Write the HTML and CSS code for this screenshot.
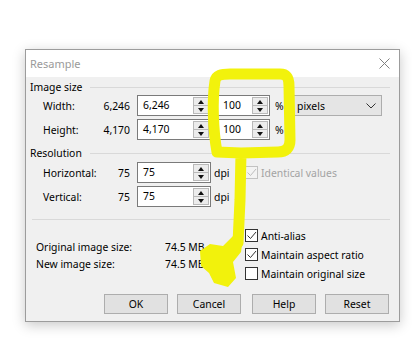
FILE: index.html
```html
<!DOCTYPE html>
<html lang="en">
<head>
    <meta charset="UTF-8">
    <meta name="viewport" content="width=device-width, initial-scale=1.0">
    <title>Resample</title>
    <link rel="stylesheet" href="styles.css">
</head>
<body>
    <div class="dialog">
        <!-- Title bar -->
        <div class="title-bar">
            <span class="title">Resample</span>
            <svg class="close" width="11" height="11" viewBox="0 0 11 11"><path d="M0.5 0.5 L10.5 10.5 M10.5 0.5 L0.5 10.5" stroke="#808080" stroke-width="1" fill="none"/></svg>
        </div>

        <div class="dialog-body">
            <!-- Image size -->
            <div class="group-head"><span>Image size</span></div>
            <div class="row">
                <div class="field-label"><span>Width:</span><span>6,246</span></div>
                <div class="spin wide"><span class="spin-text">6,246</span><span class="arrows"><span class="up"></span><span class="down"></span></span></div>
                <div class="spin narrow"><span class="spin-text">100</span><span class="arrows"><span class="up"></span><span class="down"></span></span></div>
                <span class="pct">%</span>
                <div class="select"><span>pixels</span><svg width="10" height="6" viewBox="0 0 10 6"><path d="M0.5 0.5 L5 5 L9.5 0.5" stroke="#333" fill="none"/></svg></div>
            </div>
            <div class="row">
                <div class="field-label"><span>Height:</span><span>4,170</span></div>
                <div class="spin wide"><span class="spin-text">4,170</span><span class="arrows"><span class="up"></span><span class="down"></span></span></div>
                <div class="spin narrow"><span class="spin-text">100</span><span class="arrows"><span class="up"></span><span class="down"></span></span></div>
                <span class="pct">%</span>
            </div>

            <!-- Resolution -->
            <div class="group-head resolution"><span>Resolution</span></div>
            <div class="row first">
                <div class="field-label"><span>Horizontal:</span><span>75</span></div>
                <div class="spin wide"><span class="spin-text">75</span><span class="arrows"><span class="up"></span><span class="down"></span></span></div>
                <span class="dpi">dpi</span>
                <div class="check disabled">
                    <span class="box"><svg width="11" height="11" viewBox="0 0 11 11"><path d="M1.5 5.5 L4.5 8.5 L10 2" stroke="#bdbdbd" fill="none"/></svg></span>
                    <span>Identical values</span>
                </div>
            </div>
            <div class="row">
                <div class="field-label"><span>Vertical:</span><span>75</span></div>
                <div class="spin wide"><span class="spin-text">75</span><span class="arrows"><span class="up"></span><span class="down"></span></span></div>
                <span class="dpi">dpi</span>
            </div>

            <div class="separator"></div>

            <!-- Sizes and options -->
            <div class="lower">
                <div class="sizes">
                    <div class="size-line"><span class="size-label">Original image size:</span><span>74.5 MB</span></div>
                    <div class="size-line"><span class="size-label">New image size:</span><span>74.5 MB</span></div>
                </div>
                <div class="options">
                    <div class="check">
                        <span class="box"><svg width="11" height="11" viewBox="0 0 11 11"><path d="M1.5 5.5 L4.5 8.5 L10 2" stroke="#333" fill="none"/></svg></span>
                        <span>Anti-alias</span>
                    </div>
                    <div class="check">
                        <span class="box"><svg width="11" height="11" viewBox="0 0 11 11"><path d="M1.5 5.5 L4.5 8.5 L10 2" stroke="#333" fill="none"/></svg></span>
                        <span>Maintain aspect ratio</span>
                    </div>
                    <div class="check">
                        <span class="box"></span>
                        <span>Maintain original size</span>
                    </div>
                </div>
            </div>

            <div class="buttons">
                <button class="btn">OK</button>
                <button class="btn">Cancel</button>
                <button class="btn help">Help</button>
                <button class="btn">Reset</button>
            </div>
        </div>
    </div>

    <!-- Yellow marker scribble drawn over the screenshot -->
    <svg class="scribble" width="412" height="338" viewBox="0 0 412 338">
        <path d="M241 153 L217 152 C213 130 212 100 215 81 C216 75 221 74 230 74 L280 74 C287 74 289 78 289 86 L290 140 C290 148 286 152 278 152 L241 153 L240 200 L238 243" stroke="#f2f20c" stroke-width="11" stroke-linecap="round" stroke-linejoin="round" fill="none"/>
        <polygon points="233,236 243,238 241,252 233,262 236,278 228,287 214,283 209,273 201,266 200,251 210,244 223,246" fill="#f2f20c"/>
    </svg>
</body>
</html>
```

FILE: styles.css
```css
* {
    margin: 0;
    padding: 0;
    box-sizing: border-box;
}

body {
    position: relative;
    width: 412px;
    height: 338px;
    overflow: hidden;
    background-color: #ffffff;
    font-family: "Noto Sans", "Open Sans", sans-serif;
    font-size: 10.4px;
    color: #000;
    white-space: nowrap;
}

.dialog {
    display: flex;
    flex-direction: column;
    width: 375px;
    height: 273px;
    margin: 49px 0 0 25px;
    border: 1px solid #9c9c9c;
    background-color: #f0f0f0;
    box-shadow: 0 3px 12px rgba(0, 0, 0, 0.22);
}

.title-bar {
    display: flex;
    align-items: center;
    justify-content: space-between;
    height: 27px;
    padding: 0 9px 0 4px;
    background-color: #ffffff;
}

.title {
    color: #9a9a9a;
    font-size: 11px;
}

.dialog-body {
    flex: 1;
    display: flex;
    flex-direction: column;
    padding: 3px 9px 0 4px;
}

/* Group headers with a rule after the text */
.group-head {
    display: flex;
    align-items: center;
    height: 14px;
}

.group-head span {
    width: 60px;
}

.group-head::after {
    content: "";
    flex: 1;
    height: 1px;
    background-color: #d9d9d9;
}

.group-head.resolution {
    margin-top: 6px;
}

.row {
    display: flex;
    align-items: center;
    height: 21px;
    margin-top: 3px;
    padding-left: 13px;
}

.group-head + .row {
    margin-top: 1px;
}

.row.first {
    margin-top: 2px;
}

.field-label {
    display: flex;
    justify-content: space-between;
    width: 87px;
}

/* Spin boxes */
.spin {
    display: flex;
    height: 21px;
    border: 1px solid #7a7a7a;
    background-color: #ffffff;
}

.spin.wide {
    width: 74px;
    margin-left: 7px;
}

.spin.narrow {
    width: 53px;
    margin-left: 6px;
}

.spin-text {
    flex: 1;
    padding-left: 5px;
    line-height: 19px;
}

.arrows {
    display: flex;
    flex-direction: column;
    width: 16px;
    margin: 1px;
    border: 1px solid #b9b9b9;
    background-color: #ececec;
}

.arrows span {
    flex: 1;
    display: flex;
    align-items: center;
    justify-content: center;
}

.arrows span + span {
    border-top: 1px solid #b9b9b9;
}

.arrows span::after {
    content: "";
    border-left: 3px solid transparent;
    border-right: 3px solid transparent;
}

.arrows .up::after {
    border-bottom: 4px solid #111;
}

.arrows .down::after {
    border-top: 4px solid #111;
}

.pct {
    width: 12px;
    margin-left: 5px;
}

.select {
    display: flex;
    align-items: center;
    justify-content: space-between;
    width: 90px;
    height: 21px;
    margin-left: 5px;
    padding: 0 5px 0 4px;
    border: 1px solid #adadad;
    background-color: #e5e5e5;
}

.dpi {
    width: 31px;
    margin-left: 3px;
}

/* Check boxes */
.check {
    display: flex;
    align-items: center;
    height: 19px;
}

.box {
    display: flex;
    align-items: center;
    justify-content: center;
    width: 13px;
    height: 13px;
    margin-right: 3px;
    border: 1px solid #333;
    background-color: #ffffff;
}

.check.disabled {
    color: #a3a3a3;
}

.check.disabled .box {
    border-color: #c2c2c2;
    background-color: #f3f3f3;
}

.separator {
    height: 1px;
    margin: 12px 0 0 2px;
    background-color: #d9d9d9;
}

.lower {
    display: flex;
}

.sizes {
    width: 215px;
    padding: 19px 0 0 6px;
}

.size-line {
    display: flex;
    height: 17px;
    line-height: 17px;
}

.size-label {
    width: 129px;
}

.options {
    padding-top: 6px;
}

.buttons {
    display: flex;
    justify-content: flex-end;
    gap: 9px;
    margin-top: 11px;
    padding-right: 1px;
}

.btn {
    width: 64px;
    height: 20px;
    border: 1px solid #adadad;
    background-color: #e1e1e1;
    font-family: inherit;
    font-size: 10.4px;
    color: #000;
}

.btn.help {
    margin-left: 2px;
}

.scribble {
    position: absolute;
    top: 0;
    left: 0;
    pointer-events: none;
}
```
